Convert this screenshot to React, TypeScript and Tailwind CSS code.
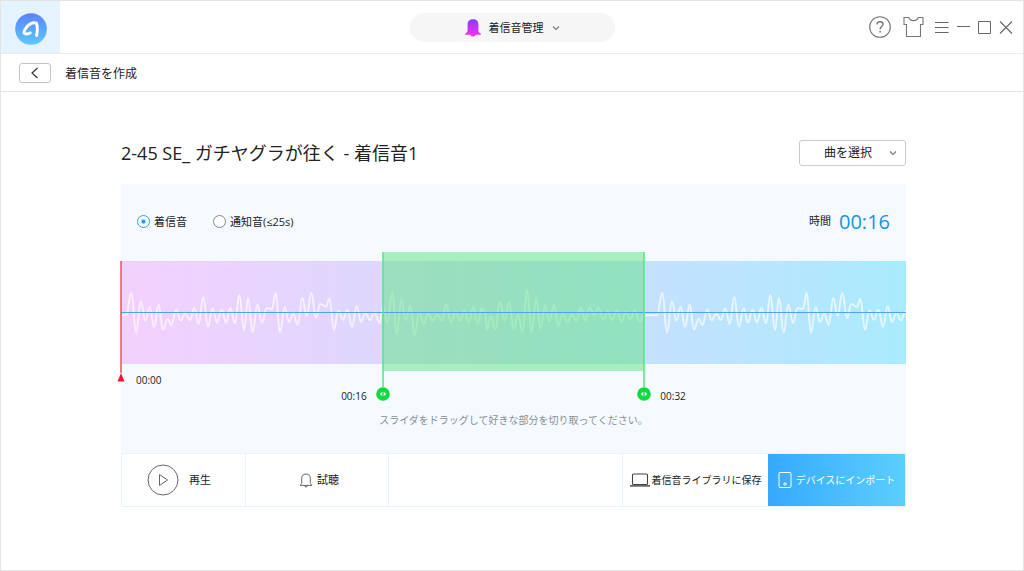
import { useState } from "react";
import type { ReactNode } from "react";

const TOTAL_SECONDS = 48;

type Point = [number, number];

// Turning points of the wave, at three units per pixel.
const OUTER_WAVE: Point[] = [
  [3, 197], [15, 197], [31, 130], [45, 248], [60, 155], [73, 213], [86, 172], [99, 232], [113, 165],
  [126, 240], [140, 208], [151, 226], [166, 180], [179, 212], [193, 192], [207, 211], [220, 175],
  [233, 223], [247, 143], [261, 231], [275, 176], [288, 219], [302, 180], [315, 219], [328, 174],
  [342, 221], [355, 136], [369, 241], [381, 145], [395, 248], [409, 165], [423, 219], [437, 175],
  [453, 178], [464, 130], [477, 248], [491, 173], [504, 217], [517, 192], [530, 226], [544, 145],
  [557, 198], [571, 130], [585, 205], [598, 163], [615, 172], [625, 147], [639, 240], [652, 182],
  [666, 210], [679, 180], [693, 231], [707, 170], [720, 217], [733, 190], [747, 212], [760, 187],
  [775, 219],
];
const MIDDLE_WAVE: Point[] = [
  [787, 170], [799, 220], [814, 128], [827, 252], [841, 151], [855, 212], [868, 170], [881, 257],
  [895, 186], [908, 222], [922, 193], [935, 213], [949, 195], [962, 213], [976, 164], [990, 219],
  [1004, 186], [1017, 215], [1030, 181], [1043, 219], [1057, 172], [1070, 222], [1082, 176],
  [1093, 190], [1098, 241], [1110, 200], [1123, 240], [1137, 156], [1151, 213], [1164, 156],
  [1178, 237], [1191, 196], [1205, 248], [1218, 120], [1232, 248], [1245, 146], [1259, 236],
  [1272, 167], [1285, 214], [1299, 165], [1312, 228], [1326, 193], [1339, 219], [1353, 195],
  [1366, 213], [1380, 174], [1393, 212], [1406, 174], [1420, 196], [1433, 174], [1447, 211],
  [1460, 184], [1474, 211], [1488, 180], [1501, 218], [1515, 186], [1528, 208], [1542, 180],
  [1556, 216], [1570, 197], [1600, 197],
];
const WAVE: Point[] = [
  ...OUTER_WAVE,
  ...MIDDLE_WAVE,
  ...OUTER_WAVE.slice(1).map(([x, y]): Point => [x + 1593, y]),
];

function smoothPath(points: Point[]) {
  return points
    .map(([x, y], i) => {
      if (i === 0) return `M${x} ${y}`;
      const [px, py] = points[i - 1];
      const half = (x - px) * 0.42;
      return `C${px + half} ${py} ${x - half} ${y} ${x} ${y}`;
    })
    .join("");
}

function formatTime(seconds: number) {
  const m = String(Math.floor(seconds / 60)).padStart(2, "0");
  const s = String(seconds % 60).padStart(2, "0");
  return `${m}:${s}`;
}

function Logo() {
  return (
    <svg viewBox="0 0 32 32" className="size-8">
      <defs>
        <linearGradient id="logo-fill" x1="0" y1="0" x2="0" y2="1">
          <stop offset="0" stopColor="#5a82fb" />
          <stop offset="1" stopColor="#5cc8fe" />
        </linearGradient>
      </defs>
      <circle cx="16" cy="16" r="15.8" fill="url(#logo-fill)" />
      <path
        d="M21.6 22.4C22.5 18 22.7 13.5 21.4 10.2C17.8 8.8 12.6 11.3 9.9 16.6C8.3 20.2 9 21 11.4 20.9C13.2 20.9 14.4 20.5 15.2 19.9"
        fill="none"
        stroke="#fff"
        strokeWidth="3"
        strokeLinecap="round"
        strokeLinejoin="round"
      />
    </svg>
  );
}

function Chevron() {
  return (
    <svg viewBox="0 0 8 6" className="h-[6px] w-2 shrink-0" fill="none" stroke="#777" strokeWidth="1.1">
      <path d="M1 1.5 4 4.5 7 1.5" />
    </svg>
  );
}

function PurpleBell() {
  return (
    <svg viewBox="0 0 16 18" className="h-[18px] w-4 shrink-0">
      <defs>
        <linearGradient id="bell-fill" x1="0" y1="0" x2="0" y2="1">
          <stop offset="0" stopColor="#8a3dfb" />
          <stop offset="1" stopColor="#fb2ff0" />
        </linearGradient>
      </defs>
      <path
        d="M8 .3C11.2.3 13.4 2.2 13.4 5.2V10.5C13.4 12.6 14 13.6 15.9 14.8V15.8H10.6C10.4 17 9.4 17.6 8 17.6S5.6 17 5.4 15.8H.1V14.8C2 13.6 2.6 12.6 2.6 10.5V5.2C2.6 2.2 4.8.3 8 .3Z"
        fill="url(#bell-fill)"
      />
    </svg>
  );
}

function HeaderTools() {
  const button = "flex cursor-pointer items-center justify-center";
  return (
    <div className="flex items-center pr-[10px]">
      <button type="button" aria-label="ヘルプ" className={button}>
        <svg viewBox="0 0 22 22" className="size-[22px]" fill="none" stroke="#777" strokeWidth="1.1">
          <circle cx="11" cy="11" r="10.3" />
          <path d="M8 8.6C8 6.8 9.3 5.8 11 5.8S14 6.8 14 8.4C14 10.5 11.1 10.7 11.1 13.3" strokeWidth="1.4" />
          <circle cx="11.1" cy="15.7" r=".9" fill="#777" stroke="none" />
        </svg>
      </button>
      <button type="button" aria-label="スキン" className={`${button} ml-3`}>
        <svg viewBox="0 0 21 22" className="h-[22px] w-[21px]" fill="none" stroke="#777" strokeWidth="1.1">
          <path d="M1 1.5H5.8C6.8 5.6 14.2 5.6 15.2 1.5H20V8.5H17.5V20.5H3.5V8.5H1Z" />
        </svg>
      </button>
      <button type="button" aria-label="メニュー" className={`${button} ml-[11px]`}>
        <svg viewBox="0 0 14 12" className="h-3 w-[14px]" stroke="#666" strokeWidth="1">
          <path d="M0 1.5H13.5M0 6.5H13.5M0 11.5H13.5" />
        </svg>
      </button>
      <button type="button" aria-label="最小化" className={`${button} ml-2`}>
        <svg viewBox="0 0 13 14" className="h-[14px] w-[13px]" stroke="#666" strokeWidth="1">
          <path d="M0 6.5H13" />
        </svg>
      </button>
      <button type="button" aria-label="最大化" className={`${button} ml-2`}>
        <svg viewBox="0 0 13 14" className="h-[14px] w-[13px]" fill="none" stroke="#666" strokeWidth="1">
          <path d="M.5 1.5H12.5V13.5H.5Z" />
        </svg>
      </button>
      <button type="button" aria-label="閉じる" className={`${button} ml-2`}>
        <svg viewBox="0 0 14 14" className="size-[14px]" fill="none" stroke="#666" strokeWidth="1.1">
          <path d="M1 1.5 13 13.5M13 1.5 1 13.5" />
        </svg>
      </button>
    </div>
  );
}

function Handle({ position, label, side }: { position: number; label: string; side: "left" | "right" }) {
  return (
    <div
      className="pointer-events-none absolute -top-[9px] flex h-[149px] w-0 flex-col items-center"
      style={{ left: `${position}%` }}
    >
      <div className="w-0.5 grow bg-[#5be589]/80" />
      <svg viewBox="0 0 14 14" className="size-[14px] shrink-0">
        <circle cx="7" cy="7" r="6.8" fill="#0edb3f" />
        <path d="M6.3 4.8V9.2L3.8 7ZM7.7 4.8V9.2L10.2 7Z" fill="#fff" />
      </svg>
      <span
        className={
          side === "left"
            ? "absolute right-4 bottom-[-3px] text-[10px] leading-4"
            : "absolute bottom-[-3px] left-4 text-[10px] leading-4"
        }
      >
        {label}
      </span>
    </div>
  );
}

function Waveform({
  start,
  end,
  onStart,
  onEnd,
}: {
  start: number;
  end: number;
  onStart: (value: number) => void;
  onEnd: (value: number) => void;
}) {
  const from = (start / TOTAL_SECONDS) * 100;
  const to = (end / TOTAL_SECONDS) * 100;
  const range =
    "pointer-events-none absolute top-[126px] left-0 h-[14px] w-full cursor-pointer opacity-0 [&::-webkit-slider-thumb]:pointer-events-auto";
  return (
    <div className="relative h-[103px] bg-linear-to-r from-[#f3d0fd] via-[#d1dbfe] to-[#a9ebfe]">
      <svg viewBox="0 34 2355 309" preserveAspectRatio="none" className="size-full">
        <path d={smoothPath(WAVE)} fill="none" stroke="#fff" strokeOpacity=".65" strokeWidth="6" />
      </svg>
      <div
        className="absolute -top-[9px] h-[119px] bg-[#5ce482]/50"
        style={{ left: `${from}%`, width: `${to - from}%` }}
      />
      <div className="absolute top-[51px] left-0 w-full border-t border-[#4ba3f5]" />
      <Handle position={from} label={formatTime(start)} side="left" />
      <Handle position={to} label={formatTime(end)} side="right" />
      <div className="absolute top-0 left-0 flex h-[121px] w-0 flex-col items-center">
        <div className="w-0.5 grow bg-[#ff3b58]/70" />
        <svg viewBox="0 0 8 9" className="h-[9px] w-2 shrink-0">
          <path d="M4 0 7.5 8.5H.5Z" fill="#fa1138" />
        </svg>
      </div>
      <span className="absolute top-[111px] left-[15px] text-[10px] leading-4">00:00</span>
      <input
        type="range"
        aria-label="開始"
        min={0}
        max={TOTAL_SECONDS}
        value={start}
        onChange={(e) => onStart(Math.min(Number(e.target.value), end - 1))}
        className={range}
      />
      <input
        type="range"
        aria-label="終了"
        min={0}
        max={TOTAL_SECONDS}
        value={end}
        onChange={(e) => onEnd(Math.max(Number(e.target.value), start + 1))}
        className={range}
      />
    </div>
  );
}

function KindOption({
  checked,
  onSelect,
  children,
}: {
  checked: boolean;
  onSelect: () => void;
  children: ReactNode;
}) {
  return (
    <label className="flex cursor-pointer items-center gap-1 text-[11px] leading-4">
      <input
        type="radio"
        name="kind"
        checked={checked}
        onChange={onSelect}
        className="size-[13px] appearance-none rounded-full border border-[#888] bg-white checked:border-[#2d9fe9] checked:bg-[radial-gradient(circle,#1b94e4_1px,#fff_3px)]"
      />
      {children}
    </label>
  );
}

export default function App() {
  const [kind, setKind] = useState("ringtone");
  const [start, setStart] = useState(16);
  const [end, setEnd] = useState(32);

  return (
    <div className="flex min-h-screen flex-col border border-[#e4e4e4] bg-white font-['Open_Sans','Noto_Sans_CJK_JP',sans-serif] text-[#222]">
      <header className="grid h-[53px] grid-cols-[1fr_205px_1fr] items-stretch border-b border-[#ececec]">
        <a href="#" aria-label="ホーム" className="flex w-[59px] items-center justify-center bg-[#e5f3fd] pt-[3px]">
          <Logo />
        </a>
        <label className="flex h-[29px] items-center justify-center gap-2 self-center rounded-full bg-[#f6f6f6] pt-px text-[11px]">
          <PurpleBell />
          <select
            aria-label="管理"
            className="field-sizing-content cursor-pointer appearance-none bg-transparent leading-4 outline-none"
          >
            <option>着信音管理</option>
          </select>
          <Chevron />
        </label>
        <div className="flex items-center justify-end">
          <HeaderTools />
        </div>
      </header>

      <div className="flex h-[38px] items-center gap-[14px] border-b border-[#e4e4e4] pl-[18px]">
        <button
          type="button"
          aria-label="戻る"
          className="flex h-5 w-8 cursor-pointer items-center justify-center rounded-[3px] border border-[#c4c4c4]"
        >
          <svg viewBox="0 0 8 12" className="h-3 w-2" fill="none" stroke="#333" strokeWidth="1.2">
            <path d="M6.5 1 1 6 6.5 11" />
          </svg>
        </button>
        <h2 className="pt-0.5 text-xs">着信音を作成</h2>
      </div>

      <main className="pt-12 pr-[117px] pb-12 pl-[120px]">
        <div className="flex h-[26px] items-center justify-between">
          <h1 className="text-lg leading-6">2-45 SE_ ガチヤグラが往く - 着信音1</h1>
          <label className="flex h-[26px] w-[107px] items-center justify-between rounded-[3px] border border-[#cacaca] pr-2 pl-6 text-xs">
            <select
              aria-label="曲"
              className="field-sizing-content cursor-pointer appearance-none bg-transparent leading-4 outline-none"
            >
              <option>曲を選択</option>
            </select>
            <Chevron />
          </label>
        </div>

        <section className="mt-[18px]">
          <div className="bg-[#f4faff]">
            <div className="flex h-[77px] items-center justify-between px-4 pb-0.5">
              <div className="flex gap-[26px]">
                <KindOption checked={kind === "ringtone"} onSelect={() => setKind("ringtone")}>
                  着信音
                </KindOption>
                <KindOption checked={kind === "notice"} onSelect={() => setKind("notice")}>
                  通知音(≤25s)
                </KindOption>
              </div>
              <p className="flex items-center gap-2 text-[11px]">
                時間
                <output className="text-xl leading-6 text-[#1594ea]">{formatTime(end - start)}</output>
              </p>
            </div>
            <Waveform start={start} end={end} onStart={setStart} onEnd={setEnd} />
            <p className="h-[89px] pt-12 text-center text-[10px] leading-4 text-[#8a8f93]">
              スライダをドラッグして好きな部分を切り取ってください。
            </p>
          </div>

          <div className="flex h-[54px] border border-[#e9f3fc] text-[11px]">
            <button
              type="button"
              className="flex w-[124px] cursor-pointer items-center gap-[10px] border-r border-[#e9f3fc] pl-[25px]"
            >
              <svg viewBox="0 0 32 32" className="size-8" fill="none" stroke="#666">
                <circle cx="16" cy="16" r="15" />
                <path d="M12.5 10.5 20.5 16 12.5 21.5Z" strokeLinejoin="round" />
              </svg>
              再生
            </button>
            <button
              type="button"
              className="flex w-[143px] cursor-pointer items-center justify-center gap-1 border-r border-[#e9f3fc] pl-1"
            >
              <svg viewBox="0 0 14 15" className="h-[15px] w-[14px]" fill="none" stroke="#666">
                <path d="M7 1C4.3 1 2.7 2.8 2.7 5.2V9.6C2.7 10.8 2 11.6 1 12.4H13C12 11.6 11.3 10.8 11.3 9.6V5.2C11.3 2.8 9.7 1 7 1ZM5.4 12.6C5.6 14.4 8.4 14.4 8.6 12.6" />
              </svg>
              試聴
            </button>
            <div className="grow" />
            <button
              type="button"
              className="flex w-[146px] cursor-pointer items-center justify-center gap-0.5 border-l border-[#e9f3fc] text-[10px]"
            >
              <svg viewBox="0 0 20 14" className="h-[14px] w-5" fill="none" stroke="#444" strokeWidth="1.1">
                <rect x="2.5" y="1" width="15" height="10.5" rx="1" />
                <path d="M0 12.9H20" strokeWidth="1.4" />
              </svg>
              着信音ライブラリに保存
            </button>
            <button
              type="button"
              className="flex w-[137px] cursor-pointer items-center justify-center gap-1 bg-linear-to-r from-[#36a9ff] to-[#5bcffe] text-[10px] text-white"
            >
              <svg viewBox="0 0 14 16" className="h-4 w-[14px]" fill="none" stroke="#fff">
                <rect x="1" y=".5" width="12" height="15" rx="1" />
                <circle cx="7" cy="12" r="1.2" />
              </svg>
              デバイスにインポート
            </button>
          </div>
        </section>
      </main>
    </div>
  );
}
